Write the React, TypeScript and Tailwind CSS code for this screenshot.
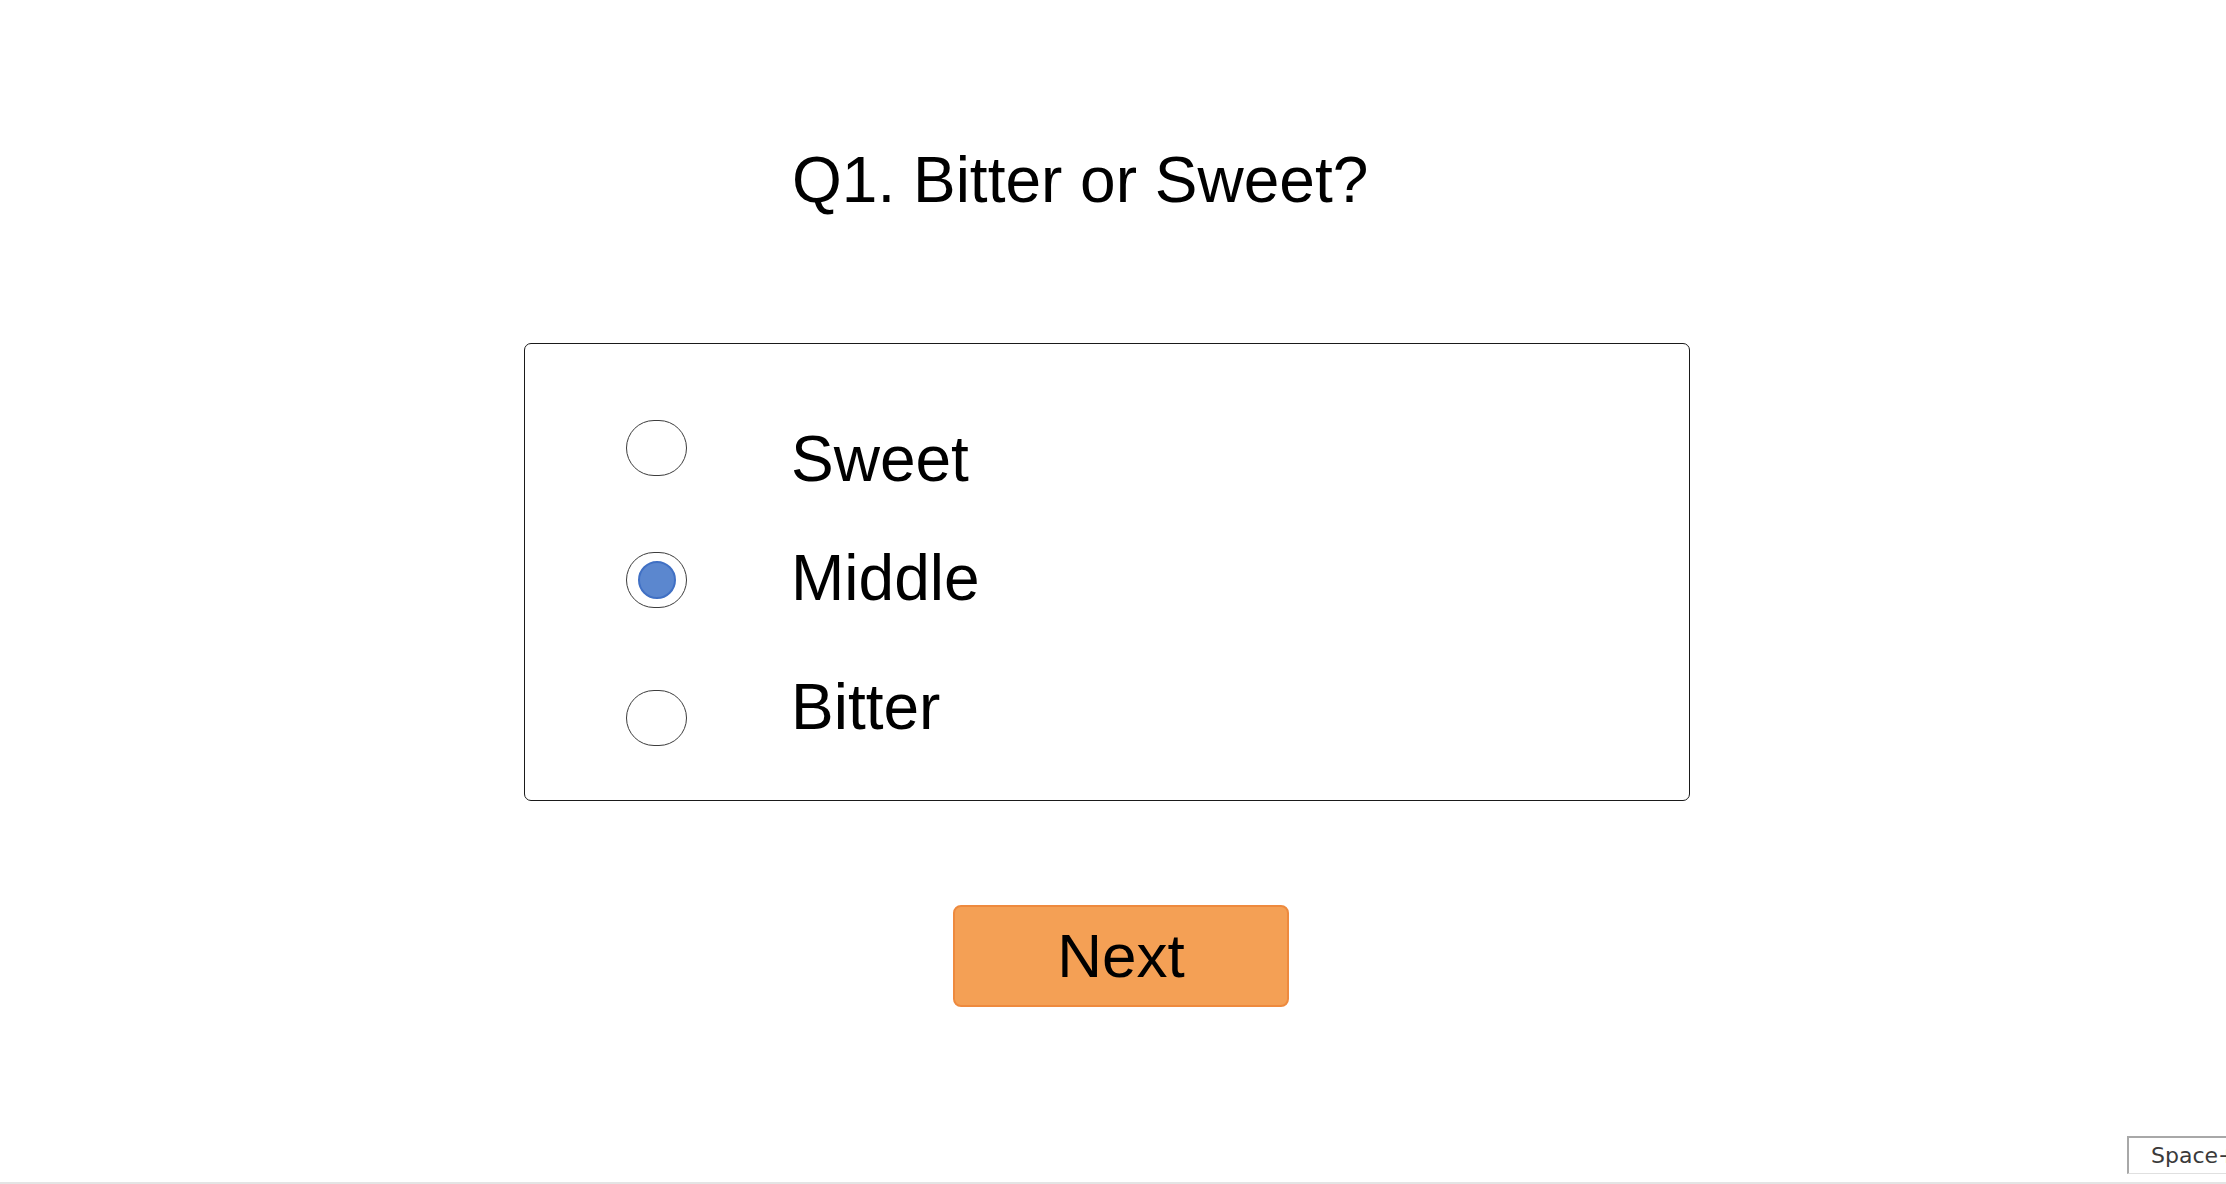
const options = [
    { label: "Sweet", checked: false, rowMt: "mt-0", circleMt: "mt-0", textMt: "mt-[7px]" },
    { label: "Middle", checked: true, rowMt: "mt-[55px]", circleMt: "mt-[6px]", textMt: "mt-0" },
    { label: "Bitter", checked: false, rowMt: "mt-[65px]", circleMt: "mt-[15px]", textMt: "mt-0" },
];

function Radio({ checked }: { checked: boolean }) {
    return (
        <div className="flex h-[56px] w-[61px] shrink-0 items-center justify-center rounded-full border border-[#3c3c3c] bg-white">
            {checked && (
                <div className="h-[38px] w-[38px] rounded-full border-2 border-[#4070c4] bg-[#5b87cf]" />
            )}
        </div>
    );
}

export default function App() {
    return (
        <div className="relative flex h-[1184px] w-full flex-col overflow-hidden bg-white font-['Liberation_Sans',Arial,sans-serif] text-black">
            <h1 className="ml-[792px] mt-[148px] text-[64px] leading-none font-normal">
                Q1. Bitter or Sweet?
            </h1>

            <div className="ml-[524px] mt-[131px] flex h-[458px] w-[1166px] flex-col rounded-[7px] border border-[#1a1a1a] pl-[101px] pt-[76px]">
                {options.map((o) => (
                    <label key={o.label} className={`flex items-start ${o.rowMt}`}>
                        <div className={o.circleMt}>
                            <Radio checked={o.checked} />
                        </div>
                        <span className={`ml-[104px] text-[64px] leading-none ${o.textMt}`}>
                            {o.label}
                        </span>
                    </label>
                ))}
            </div>

            <button className="ml-[953px] mt-[104px] flex h-[102px] w-[336px] items-center justify-center rounded-[8px] border-2 border-[#ee8a3e] bg-[#f4a055] text-[62px] leading-none text-black">
                Next
            </button>

            <div className="absolute bottom-[10px] left-[2127px] flex h-[38px] w-[140px] items-center border-l-2 border-t-2 border-b border-l-[#a8a8a8] border-t-[#a8a8a8] border-b-[#e0e0e0] bg-white pl-[22px] font-['DejaVu_Sans',Verdana,sans-serif] text-[22px] text-[#3a3a3a]">
                Space+
            </div>
            <div className="absolute bottom-0 left-0 h-[2px] w-full bg-[#e4e4e4]" />
        </div>
    );
}
